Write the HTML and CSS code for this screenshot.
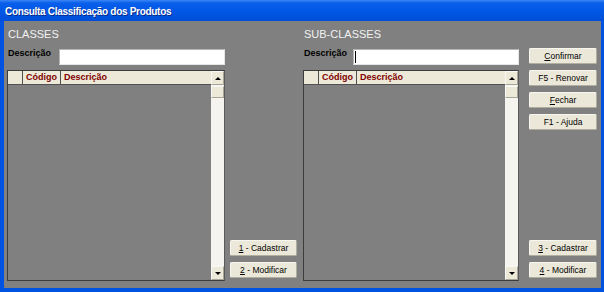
FILE: index.html
```html
<!DOCTYPE html>
<html lang="pt-BR">
<head>
    <meta charset="UTF-8">
    <title>Consulta Classificação dos Produtos</title>
    <link rel="stylesheet" href="styles.css">
</head>
<body>

    <div class="window">
        <div class="title-bar">Consulta Classificação dos Produtos</div>

        <div class="client">
            <!-- Classes -->
            <div class="panel panel-left">
                <h2>CLASSES</h2>
                <div class="search-row">
                    <label class="label-left">Descrição</label>
                    <span class="field"><input type="text"></span>
                </div>
                <div class="data-grid">
                    <div class="grid-body">
                        <div class="grid-header">
                            <div class="cell cell-ind"></div>
                            <div class="cell cell-code">Código</div>
                            <div class="cell cell-desc">Descrição</div>
                        </div>
                    </div>
                    <div class="scrollbar">
                        <div class="sb-btn"><span class="arrow-up"></span></div>
                        <div class="sb-thumb"></div>
                        <div class="sb-track"></div>
                        <div class="sb-btn"><span class="arrow-down"></span></div>
                    </div>
                </div>
            </div>

            <div class="btn-col btn-col-mid">
                <button><u>1</u> - Cadastrar</button>
                <button><u>2</u> - Modificar</button>
            </div>

            <!-- Sub-classes -->
            <div class="panel panel-right">
                <h2>SUB-CLASSES</h2>
                <div class="search-row">
                    <label class="label-right">Descrição</label>
                    <span class="field has-caret"><input type="text"></span>
                </div>
                <div class="data-grid">
                    <div class="grid-body">
                        <div class="grid-header">
                            <div class="cell cell-ind"></div>
                            <div class="cell cell-code">Código</div>
                            <div class="cell cell-desc">Descrição</div>
                        </div>
                    </div>
                    <div class="scrollbar">
                        <div class="sb-btn"><span class="arrow-up"></span></div>
                        <div class="sb-thumb"></div>
                        <div class="sb-track"></div>
                        <div class="sb-btn"><span class="arrow-down"></span></div>
                    </div>
                </div>
            </div>

            <div class="btn-col btn-col-right">
                <div class="btn-stack">
                    <button><u>C</u>onfirmar</button>
                    <button>F5 - Renovar</button>
                    <button><u>F</u>echar</button>
                    <button>F1 - Ajuda</button>
                </div>
                <div class="btn-stack">
                    <button><u>3</u> - Cadastrar</button>
                    <button><u>4</u> - Modificar</button>
                </div>
            </div>
        </div>
    </div>

</body>
</html>
```

FILE: styles.css
```css
/* Global */
body {
    margin: 0;
    padding: 0;
    font-family: "Liberation Sans", Arial, sans-serif;
    background: #808080;
}

/* Window frame */
.window {
    width: 604px;
    height: 292px;
    display: flex;
    flex-direction: column;
    background: #0053e0;
}

.title-bar {
    height: 21px;
    box-sizing: border-box;
    padding: 5px 0 0 5px;
    background: linear-gradient(#3b86f5 0, #0a5fea 3px, #0058e6 50%, #004ed8 100%);
    color: #fff;
    font-size: 10px;
    font-weight: bold;
    letter-spacing: -0.3px;
    line-height: 13px;
    text-shadow: 1px 1px 0 #0a2a8a;
    white-space: nowrap;
}

.client {
    flex: 1;
    display: flex;
    margin: 0 3px 4px 4px;
    padding: 0 4px 7px 3px;
    background: #808080;
}

/* Panels */
.panel {
    display: flex;
    flex-direction: column;
}

.panel-left {
    width: 218px;
}

.panel-right {
    width: 216px;
    margin-left: 6px;
}

.panel h2 {
    margin: 7px 0 0 1px;
    font-size: 11px;
    font-weight: normal;
    line-height: 13px;
    color: #f2f2f2;
}

.search-row {
    display: flex;
    align-items: flex-start;
    margin-top: 7px;
    height: 17px;
}

.search-row label {
    font-size: 9px;
    font-weight: bold;
    line-height: 11px;
    padding-left: 1px;
    color: #000;
}

.label-left {
    width: 51px;
}

.label-right {
    width: 49px;
}

.field {
    flex: 1;
    position: relative;
    margin-top: 1px;
}

.field input {
    display: block;
    width: 100%;
    height: 16px;
    box-sizing: border-box;
    margin: 0;
    padding: 0;
    border: 1px solid #e6e6e6;
    border-top-color: #b4b4b4;
    border-left-color: #b4b4b4;
    background: #fff;
    outline: none;
}

.has-caret::after {
    content: "";
    position: absolute;
    left: 2px;
    top: 2px;
    width: 1px;
    height: 12px;
    background: #000;
}

/* Data grid */
.data-grid {
    flex: 1;
    display: flex;
    margin-top: 5px;
    border: 1px solid #3c3c3c;
    border-right-color: #5a5a5a;
    background: #808080;
}

.grid-body {
    flex: 1;
}

.grid-header {
    display: flex;
    height: 13px;
    background: #ece9d8;
    border-bottom: 1px solid #505050;
}

.cell {
    box-sizing: border-box;
    height: 13px;
    font-size: 9px;
    font-weight: bold;
    line-height: 13px;
    color: #800000;
    padding-left: 3px;
    white-space: nowrap;
}

.cell-ind {
    width: 15px;
    border-right: 1px solid #505050;
}

.cell-code {
    width: 38px;
    border-right: 1px solid #505050;
}

.cell-desc {
    flex: 1;
}

.scrollbar {
    width: 13px;
    display: flex;
    flex-direction: column;
    background: #f5f4ee;
}

.sb-btn,
.sb-thumb {
    box-sizing: border-box;
    height: 14px;
    background: #ece9d8;
    border: 1px solid #f8f8f4;
    border-right-color: #a8a69a;
    border-bottom-color: #a8a69a;
    display: flex;
    align-items: center;
    justify-content: center;
}

.sb-thumb {
    height: 12px;
    margin-top: 1px;
}

.sb-track {
    flex: 1;
}

.arrow-up,
.arrow-down {
    width: 0;
    height: 0;
    border-left: 3px solid transparent;
    border-right: 3px solid transparent;
}

.arrow-up {
    border-bottom: 3px solid #000;
}

.arrow-down {
    border-top: 3px solid #000;
}

/* Button columns */
.btn-col {
    display: flex;
    flex-direction: column;
}

.btn-col-mid {
    width: 67px;
    margin-left: 5px;
    justify-content: flex-end;
    padding-bottom: 3px;
}

.btn-col-right {
    width: 68px;
    margin-left: 10px;
    justify-content: space-between;
    padding: 27px 0 3px;
}

.btn-stack {
    display: flex;
    flex-direction: column;
    gap: 6px;
}

.btn-col-mid button + button {
    margin-top: 6px;
}

button {
    height: 16px;
    width: 100%;
    margin: 0;
    padding: 0;
    box-sizing: border-box;
    background: #ebe8d9;
    border: 1px solid #f7f6ef;
    border-right-color: #b0ae9f;
    border-bottom-color: #b0ae9f;
    border-radius: 2px;
    font-family: "Liberation Sans", Arial, sans-serif;
    font-size: 8.5px;
    line-height: 14px;
    color: #000;
    white-space: nowrap;
}

button u {
    text-decoration: underline;
}
```
